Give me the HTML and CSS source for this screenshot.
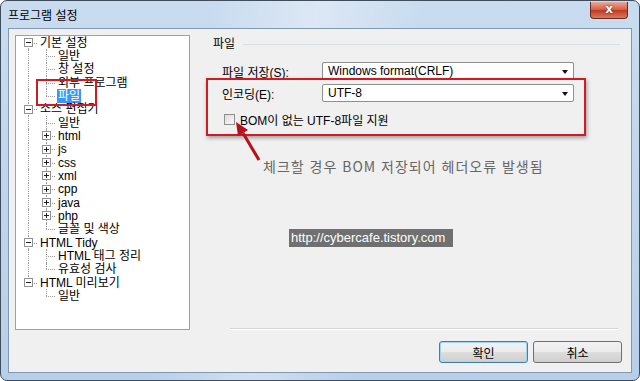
FILE: index.html
```html
<!DOCTYPE html>
<html lang="ko">
  <head>
    <meta charset="UTF-8" />
    <title>프로그램 설정</title>
    <link rel="stylesheet" href="styles.css">
  </head>
  <body>
    <div class="window">
      <div class="titlebar">
        <span class="title">프로그램 설정</span>
        <span class="close">x</span>
      </div>
      <div class="client">
        <div class="main">
          <div class="tree">
            <div class="row"><span class="col f"><span class="box minus"></span></span><span class="label">기본 설정</span></div>
            <div class="row"><span class="col v"></span><span class="col t"></span><span class="label">일반</span></div>
            <div class="row"><span class="col v"></span><span class="col t"></span><span class="label">창 설정</span></div>
            <div class="row"><span class="col v"></span><span class="col t"></span><span class="label">외부 프로그램</span></div>
            <div class="row"><span class="col v"></span><span class="col l"></span><span class="label selected">파일</span></div>
            <div class="row"><span class="col t"><span class="box minus"></span></span><span class="label">소스 편집기</span></div>
            <div class="row"><span class="col v"></span><span class="col t"></span><span class="label">일반</span></div>
            <div class="row"><span class="col v"></span><span class="col t"><span class="box plus"></span></span><span class="label">html</span></div>
            <div class="row"><span class="col v"></span><span class="col t"><span class="box plus"></span></span><span class="label">js</span></div>
            <div class="row"><span class="col v"></span><span class="col t"><span class="box plus"></span></span><span class="label">css</span></div>
            <div class="row"><span class="col v"></span><span class="col t"><span class="box plus"></span></span><span class="label">xml</span></div>
            <div class="row"><span class="col v"></span><span class="col t"><span class="box plus"></span></span><span class="label">cpp</span></div>
            <div class="row"><span class="col v"></span><span class="col t"><span class="box plus"></span></span><span class="label">java</span></div>
            <div class="row"><span class="col v"></span><span class="col t"><span class="box plus"></span></span><span class="label">php</span></div>
            <div class="row"><span class="col v"></span><span class="col l"></span><span class="label">글꼴 및 색상</span></div>
            <div class="row"><span class="col t"><span class="box minus"></span></span><span class="label">HTML Tidy</span></div>
            <div class="row"><span class="col v"></span><span class="col t"></span><span class="label">HTML 태그 정리</span></div>
            <div class="row"><span class="col v"></span><span class="col l"></span><span class="label">유효성 검사</span></div>
            <div class="row"><span class="col l"><span class="box minus"></span></span><span class="label">HTML 미리보기</span></div>
            <div class="row"><span class="col"></span><span class="col l"></span><span class="label">일반</span></div>
          </div>
          <div class="pane">
            <div class="group"><span>파일</span><span class="rule"></span></div>
            <div class="field">
              <span class="field-label">파일 저장(S):</span>
              <div class="combo">Windows format(CRLF)<span class="arrow"></span></div>
            </div>
            <div class="field second">
              <span class="field-label">인코딩(E):</span>
              <div class="combo">UTF-8<span class="arrow"></span></div>
            </div>
            <div class="check"><span class="checkbox"></span>BOM이 없는 UTF-8파일 지원</div>
            <div class="sep"></div>
          </div>
        </div>
        <div class="buttons">
          <button class="btn default">확인</button>
          <button class="btn">취소</button>
        </div>
      </div>

      <!-- annotations drawn over the screenshot -->
      <div class="mark mark-tree"></div>
      <div class="mark mark-pane"></div>
      <svg class="arrow-note" width="640" height="381" viewBox="0 0 640 381">
        <line x1="258" y1="159" x2="242" y2="132" stroke="#b3111b" stroke-width="3" />
        <polygon points="235,121 247,129 237,135" fill="#b3111b" />
      </svg>
      <div class="note">체크할 경우 BOM 저장되어 헤더오류 발생됨</div>
      <div class="watermark">http://cybercafe.tistory.com</div>
    </div>
  </body>
</html>
```

FILE: styles.css
```css
body {
  margin: 0;
  font-family: "Liberation Sans", "Noto Sans CJK KR", sans-serif;
  font-size: 12px;
  color: #000;
  background: #fff;
}

.window {
  position: relative;
  width: 640px;
  height: 381px;
  box-sizing: border-box;
  border: 1px solid #3f4d5c;
  border-radius: 7px;
  background:
    linear-gradient(100deg, rgba(255,255,255,0) 30%, rgba(255,255,255,0.35) 45%, rgba(255,255,255,0) 60%),
    linear-gradient(#c9dcef, #b7cfe8);
  overflow: hidden;
}

.titlebar {
  display: flex;
  align-items: flex-start;
  height: 27px;
}

.title {
  margin: 7px 0 0 7px;
  line-height: 14px;
  font-family: "Noto Sans CJK KR", sans-serif;
}

.close {
  margin: 1px 11px 0 auto;
  width: 38px;
  height: 17px;
  box-sizing: border-box;
  border: 1px solid #6e2a20;
  border-top: none;
  border-radius: 0 0 4px 4px;
  background: linear-gradient(#eaa898, #d65a43 50%, #c13a22 52%, #d77a64);
  color: #fff;
  font: bold 12px/15px "DejaVu Sans", sans-serif;
  text-align: center;
  text-shadow: 0 0 2px #5a1008;
}

.client {
  height: 345px;
  margin: 0 7px;
  box-sizing: border-box;
  border: 1px solid #8497b0;
  background: #f0f0f0;
  padding: 6px 9px 0 6px;
}

.main {
  display: flex;
  height: 295px;
}

/* tree view */
.tree {
  width: 175px;
  flex: none;
  box-sizing: border-box;
  border: 1px solid #a0a0a0;
  background: #fff;
  padding-left: 3px;
}

.row {
  display: flex;
  align-items: center;
  height: 13.33px;
}

.col {
  position: relative;
  display: flex;
  align-items: center;
  width: 18px;
  height: 100%;
  flex: none;
}

.col::before,
.col::after {
  content: "";
  position: absolute;
  display: none;
  left: 9px;
}

.col::before {
  top: 0;
  bottom: 0;
  border-left: 1px dotted #9a9a9a;
}

.col::after {
  right: 0;
  top: 50%;
  border-top: 1px dotted #9a9a9a;
}

.col.v::before,
.col.t::before,
.col.t::after,
.col.l::after,
.col.f::after,
.col.f::before,
.col.l::before {
  display: block;
}

.col.l::before {
  bottom: 50%;
}

.col.f::before {
  top: 50%;
}

.box {
  position: relative;
  z-index: 1;
  margin-left: 5px;
  width: 9px;
  height: 9px;
  box-sizing: border-box;
  border: 1px solid #919191;
  background-color: #fff;
  background-repeat: no-repeat;
  background-position: center;
}

.box.minus {
  background-image: linear-gradient(#222, #222);
  background-size: 5px 1px;
}

.box.plus {
  background-image: linear-gradient(#222, #222), linear-gradient(#222, #222);
  background-size: 5px 1px, 1px 5px;
}

.label {
  margin-left: 2px;
  padding: 0 1px;
  line-height: 14px;
  white-space: nowrap;
}

.label.selected {
  background: #3399ff;
  color: #fff;
}

/* right pane */
.pane {
  flex: 1;
  display: flex;
  flex-direction: column;
}

.group {
  display: flex;
  align-items: center;
  margin-top: 1px;
  padding-left: 23px;
  line-height: 16px;
}

.rule {
  flex: 1;
  margin: 0 2px 0 8px;
  border-top: 1px solid #d5dfe5;
}

.field {
  display: flex;
  align-items: center;
  margin-top: 10px;
  padding-left: 32px;
}

.field.second {
  margin-top: 4px;
}

.field-label {
  width: 100px;
}

.combo {
  position: relative;
  width: 252px;
  height: 18px;
  box-sizing: border-box;
  border: 1px solid #8f8f8f;
  border-radius: 2px;
  background: #fff;
  padding-left: 5px;
  line-height: 16px;
}

.arrow {
  position: absolute;
  right: 5px;
  top: 7px;
  border-left: 3px solid transparent;
  border-right: 3px solid transparent;
  border-top: 4px solid #111;
}

.check {
  display: flex;
  align-items: center;
  height: 16px;
  margin-top: 9px;
  padding-left: 34px;
}

.checkbox {
  width: 11px;
  height: 11px;
  box-sizing: border-box;
  margin-right: 5px;
  border: 1px solid #8e8f8f;
  background: linear-gradient(135deg, #dcdcdc, #fafafa);
}

.sep {
  margin: auto 4px 0 40px;
  border-top: 1px solid #d5d5d5;
  border-bottom: 1px solid #fff;
}

/* dialog buttons */
.buttons {
  display: flex;
  justify-content: flex-end;
  gap: 5px;
  margin-top: 11px;
}

.btn {
  width: 89px;
  height: 22px;
  padding: 0;
  border: 1px solid #707070;
  border-radius: 3px;
  background: linear-gradient(#f2f2f2, #ebebeb 50%, #dddddd 51%, #cfcfcf);
  font-family: "Noto Sans CJK KR", sans-serif;
  font-size: 12px;
  color: #000;
}

.btn.default {
  border-color: #3c7fb1;
  box-shadow: inset 0 0 0 1px #9fd7f3;
}

/* annotations */
.mark {
  position: absolute;
  box-sizing: border-box;
  border: 2px solid #cf1b24;
}

.mark-tree {
  left: 35px;
  top: 78px;
  width: 61px;
  height: 27px;
}

.mark-pane {
  left: 205px;
  top: 77px;
  width: 380px;
  height: 58px;
  box-shadow: 1px 2px 4px rgba(0, 0, 0, 0.35);
}

.arrow-note {
  position: absolute;
  left: 0;
  top: 0;
}

.note {
  position: absolute;
  left: 262px;
  top: 155px;
  font-family: "Noto Sans CJK KR", sans-serif;
  font-size: 14px;
  line-height: 20px;
  letter-spacing: 1px;
  color: #666;
  white-space: nowrap;
}

.watermark {
  position: absolute;
  left: 288px;
  top: 228px;
  width: 164px;
  height: 18px;
  box-sizing: border-box;
  padding-left: 2px;
  background: #707070;
  color: #fff;
  font-family: "Liberation Sans", sans-serif;
  font-size: 13px;
  line-height: 18px;
  white-space: nowrap;
}
```
